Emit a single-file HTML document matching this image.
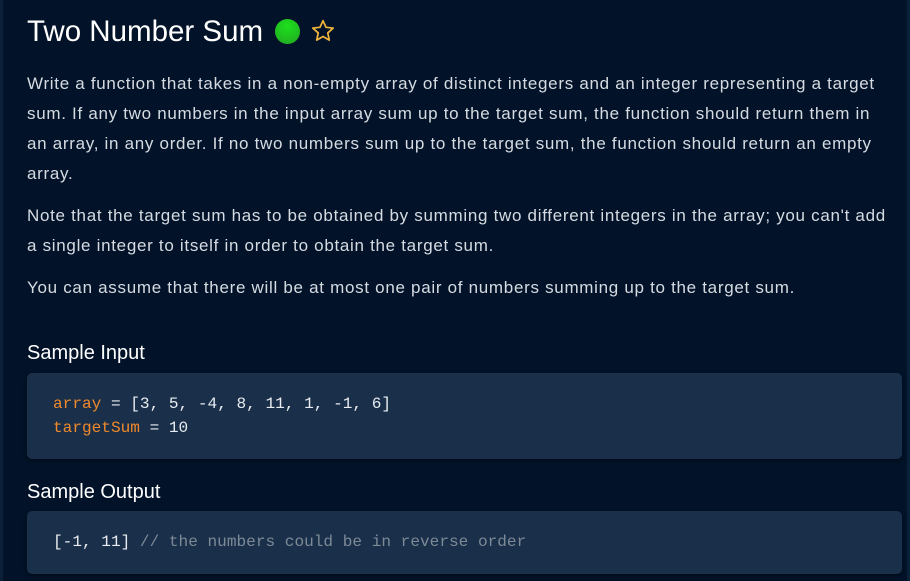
<!DOCTYPE html>
<html><head><style>
html,body{margin:0;padding:0}
body{width:910px;height:581px;background:#021329;position:relative;overflow:hidden;font-family:"Liberation Sans",sans-serif;color:#dfe3e8}
.ls{position:absolute;left:0;top:0;width:3px;height:581px;background:#0b2039}
.rs{position:absolute;right:0;top:0;width:3px;height:581px;background:#0b2039}
h1{position:absolute;left:27px;top:12px;margin:0;font-weight:normal;font-size:29.5px;color:#fff;white-space:nowrap;line-height:40px}
.dot{display:inline-block;width:25px;height:25px;border-radius:50%;background:radial-gradient(circle at 50% 30%,#1de01d,#22a622);vertical-align:-3px;margin-left:12px}
.p{position:absolute;left:27px;font-size:17px;letter-spacing:0.7px;line-height:30px;white-space:nowrap;color:#d6dbe2}
h2{position:absolute;left:27px;margin:0;font-weight:normal;font-size:20px;color:#fff;line-height:24px}
.box{position:absolute;left:27px;width:875px;background:#1a2f4a;border-radius:5px;box-shadow:0 2px 4px rgba(0,0,0,.4)}
.code{position:absolute;left:53px;font-family:"Liberation Mono",monospace;font-size:16.1px;line-height:24px;white-space:pre;color:#e8ecf0}
.o{color:#f0892a}.c{color:#7d8a96}
</style></head><body>
<div class="ls"></div><div class="rs"></div>
<h1>Two Number Sum<span class="dot"></span><svg width="26" height="26" viewBox="0 0 24 24" style="vertical-align:-3px;margin-left:10px"><path d="M12 2.5l2.8 6.1 6.6.7-5 4.5 1.4 6.6L12 17.1l-5.8 3.3 1.4-6.6-5-4.5 6.6-.7z" fill="none" stroke="#f0b43c" stroke-width="1.6" stroke-linejoin="round"/></svg></h1>
<div class="p" style="top:69px">Write a function that takes in a non-empty array of distinct integers and an integer representing a target<br>sum. If any two numbers in the input array sum up to the target sum, the function should return them in<br>an array, in any order. If no two numbers sum up to the target sum, the function should return an empty<br>array.</div>
<div class="p" style="top:201px">Note that the target sum has to be obtained by summing two different integers in the array; you can't add<br>a single integer to itself in order to obtain the target sum.</div>
<div class="p" style="top:273px">You can assume that there will be at most one pair of numbers summing up to the target sum.</div>
<h2 style="top:341px">Sample Input</h2>
<div class="box" style="top:373px;height:86px"></div>
<div class="code" style="top:392px"><span class="o">array</span> = [3, 5, -4, 8, 11, 1, -1, 6]
<span class="o">targetSum</span> = 10</div>
<h2 style="top:480px">Sample Output</h2>
<div class="box" style="top:511px;height:63px"></div>
<div class="code" style="top:530px">[-1, 11] <span class="c">// the numbers could be in reverse order</span></div>
</body></html>
